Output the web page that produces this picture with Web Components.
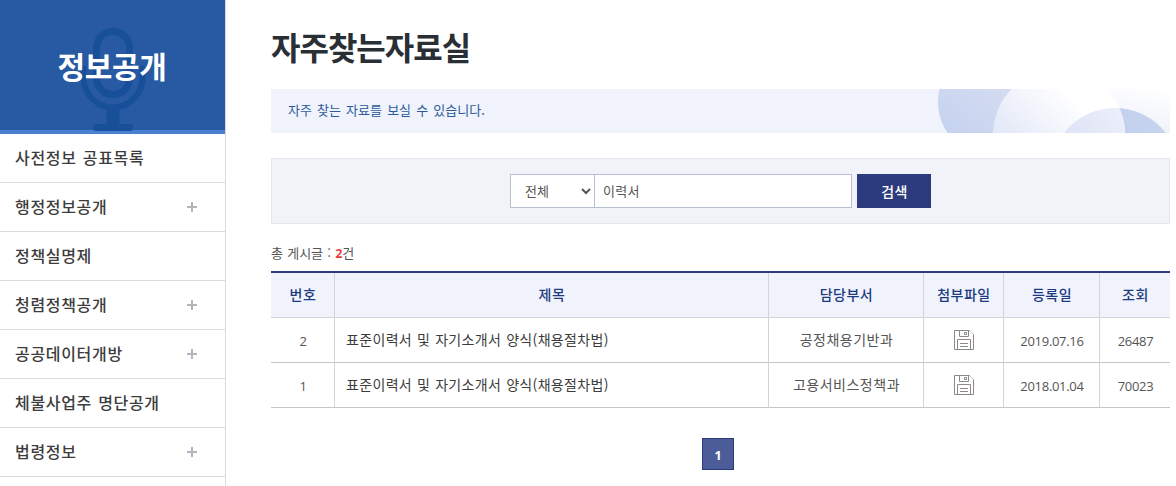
<!DOCTYPE html>
<html lang="ko">
<head>
<meta charset="UTF-8">
<title>자주찾는자료실</title>
<style>
  :root {
    --navy: #2c3b7d;
    --panel: #f0f3fb;
    --line: #d3d4d9;
    --ink: #3c3c3c;
  }
  body {
    margin: 0;
    height: 486px;
    overflow: hidden;
    background: #fff;
    color: var(--ink);
    font-family: "Noto Sans CJK KR", sans-serif;
    font-size: 13px;
  }
</style>
</head>
<body>
<info-page>
  <side-menu slot="side" heading="정보공개">
    <side-item>사전정보 공표목록</side-item>
    <side-item more>행정정보공개</side-item>
    <side-item>정책실명제</side-item>
    <side-item more>청렴정책공개</side-item>
    <side-item more>공공데이터개방</side-item>
    <side-item>체불사업주 명단공개</side-item>
    <side-item more>법령정보</side-item>
  </side-menu>
  <page-title>자주찾는자료실</page-title>
  <page-notice>자주 찾는 자료를 보실 수 있습니다.</page-notice>
  <search-bar value="이력서"></search-bar>
  <post-count count="2"></post-count>
  <post-table></post-table>
  <page-nav>1</page-nav>
</info-page>

<script>
function define(name, render) {
  customElements.define(name, class extends HTMLElement {
    constructor() {
      super();
      this.attachShadow({ mode: 'open' });
    }
    connectedCallback() {
      this.shadowRoot.innerHTML = render(this);
    }
  });
}

// ====== LAYOUT ======
define('info-page', () => `
  <style>
    :host { display: grid; grid-template-columns: 226px 899px; column-gap: 45px; height: 486px; }
    main { display: flex; flex-direction: column; }
  </style>
  <slot name="side"></slot>
  <main><slot></slot></main>
`);

// ====== SIDE MENU ======
define('side-menu', el => `
  <style>
    :host { display: block; box-sizing: border-box; height: 486px; border-right: 1px solid #dcdcdf; }
    header {
      position: relative;
      display: flex;
      justify-content: center;
      box-sizing: border-box;
      height: 134px;
      background: #275aa3;
      border-bottom: 4px solid #4a80d2;
    }
    svg { position: absolute; left: 0; top: 0; }
    h2 {
      position: relative;
      margin: 0;
      padding-right: 1px;
      color: #fff;
      font-size: 30px;
      font-weight: 700;
      line-height: 130px;
      letter-spacing: -0.4px;
    }
  </style>
  <header>
    <svg width="225" height="134" fill="none" stroke="#184f99" aria-hidden="true">
      <rect x="96.5" y="31.5" width="33" height="63" rx="16.5" stroke-width="7"/>
      <path d="M83.500 68.500v9a29.500 30 0 0 0 59 0v-9" stroke-width="6" stroke-linecap="round"/>
      <path d="M106.500 108h13v16h10a3.500 3.500 0 0 1 0 7h-33a3.500 3.500 0 0 1 0-7h10z" fill="#184f99" stroke="none"/>
    </svg>
    <h2>${el.getAttribute('heading')}</h2>
  </header>
  <nav><slot></slot></nav>
`);

define('side-item', el => `
  <style>
    :host {
      display: flex;
      align-items: center;
      justify-content: space-between;
      box-sizing: border-box;
      height: 49px;
      padding: 0 28px 0 15px;
      border-bottom: 1px solid #dcdcdf;
      font-size: 16px;
      font-weight: 500;
      letter-spacing: 0.68px;
      word-spacing: 1px;
    }
    span { padding-bottom: 2px; }
  </style>
  <span><slot></slot></span>
  ${el.hasAttribute('more') ? '<svg width="10" height="10" fill="#b1b4bc"><path d="M4 0h2v4h4v2H6v4H4V6H0V4h4z"/></svg>' : ''}
`);

// ====== HEADING ======
define('page-title', () => `
  <style>
    :host { display: block; height: 89px; }
    h1 { margin: 0; color: #2a2e35; font-size: 32px; font-weight: 700; line-height: 93px; letter-spacing: -1px; }
  </style>
  <h1><slot></slot></h1>
`);

define('page-notice', () => `
  <style>
    :host {
      display: flex;
      justify-content: space-between;
      height: 44px;
      margin-bottom: 25px;
      padding-left: 17px;
      background: var(--panel);
      color: #2d5a9c;
      line-height: 42px;
      word-spacing: 1.5px;
    }
  </style>
  <span><slot></slot></span>
  <svg width="233" height="44" viewBox="937 89 233 44" aria-hidden="true">
    <defs>
      <linearGradient id="back" x1="0" y1="1" x2="1" y2="0">
        <stop offset=".5" stop-color="#f0f3fb"/><stop offset="1" stop-color="#fff"/>
      </linearGradient>
      <linearGradient id="left" x1="0" y1="1" x2=".7" y2="0">
        <stop offset="0" stop-color="#c0cfee"/><stop offset="1" stop-color="#dce1f3"/>
      </linearGradient>
      <linearGradient id="mid" gradientUnits="userSpaceOnUse" x1="1010" y1="140" x2="1060" y2="85">
        <stop offset="0" stop-color="#e4e9f8"/><stop offset="1" stop-color="#fff"/>
      </linearGradient>
      <linearGradient id="right" gradientUnits="userSpaceOnUse" x1="1090" y1="133" x2="1150" y2="105">
        <stop offset="0" stop-color="#c2d0ee"/><stop offset="1" stop-color="#c6d3ef"/>
      </linearGradient>
      <linearGradient id="lens" gradientUnits="userSpaceOnUse" x1="1075" y1="133" x2="1118" y2="108">
        <stop offset="0" stop-color="#dfe5f6"/><stop offset="1" stop-color="#eceffa"/>
      </linearGradient>
      <clipPath id="midclip"><circle cx="1059" cy="135" r="66"/></clipPath>
    </defs>
    <rect x="937" y="89" width="233" height="44" fill="url(#back)"/>
    <circle cx="993" cy="102" r="55" fill="url(#left)"/>
    <circle cx="1115" cy="172.500" r="64.500" fill="url(#right)"/>
    <circle cx="1059" cy="135" r="66" fill="url(#mid)"/>
    <circle cx="1115" cy="172.500" r="64.500" fill="url(#lens)" clip-path="url(#midclip)"/>
  </svg>
`);

// ====== SEARCH ======
define('search-bar', el => `
  <style>
    :host { display: block; }
    form {
      display: flex;
      justify-content: center;
      align-items: center;
      box-sizing: border-box;
      height: 66px;
      margin: 0;
      border: 1px solid #e3e6f3;
      background: #f2f3f9;
    }
    select, input, button { box-sizing: border-box; height: 34px; margin: 0; border-radius: 0; font: inherit; }
    select, input { border: 1px solid #b8bfd5; background: #fff; color: #555; }
    select { width: 85px; padding: 0 1px 1px 10px; }
    input { width: 258px; margin-left: -1px; padding: 0 8px 2px; outline: 0; letter-spacing: 0.3px; }
    button { width: 74px; margin-left: 5px; padding: 0 0 1px 1px; border: 0; background: var(--navy); color: #fff; font-size: 14px; font-weight: 500; letter-spacing: 0.4px; }
  </style>
  <form>
    <select aria-label="검색 구분"><option>전체</option></select>
    <input type="text" aria-label="검색어" value="${el.getAttribute('value')}">
    <button type="button">검색</button>
  </form>
`);

// ====== BOARD ======
define('post-count', el => `
  <style>
    :host { display: block; height: 47px; color: #555; line-height: 58px; word-spacing: 0.6px; }
    b { color: #ee3e3e; font-family: "Open Sans", sans-serif; font-size: 12.5px; }
  </style>
  총 게시글 : <b>${el.getAttribute('count')}</b>건
`);

const posts = [
  { no: 2, title: '표준이력서 및 자기소개서 양식(채용절차법)', dept: '공정채용기반과', date: '2019.07.16', views: 26487 },
  { no: 1, title: '표준이력서 및 자기소개서 양식(채용절차법)', dept: '고용서비스정책과', date: '2018.01.04', views: 70023 },
];

define('file-icon', () => `
  <style>:host { display: inline-block; width: 20px; height: 20px; } svg { display: block; }</style>
  <svg width="20" height="20" fill="none" stroke="#8d878b" aria-label="첨부파일">
    <path d="M15.500.5H.5v19h19V4.500M5.500.5v6h9v-6M10.500 2.500h2v2h-2zM3.500 19.500v-10h13v10M6 13.500h8M6 16.500h8"/>
    <path d="M15.500.5l4 4" stroke-dasharray="1 .6"/>
  </svg>
`);

define('post-table', () => `
  <style>
    :host { display: block; }
    table { width: 899px; table-layout: fixed; border-collapse: separate; border-spacing: 0; border-top: 2px solid var(--navy); }
    th, td {
      box-sizing: border-box;
      height: 45px;
      padding: 0 0 2px 1px;
      border-right: 1px solid var(--line);
      border-bottom: 1px solid #c6c6c8;
      color: #555;
      font-size: 14px;
      font-weight: 400;
      line-height: 20px;
      letter-spacing: 0.5px;
      text-align: center;
    }
    th { background: var(--panel); border-bottom-color: var(--line); color: #1c3a80; font-weight: 500; }
    th:last-child, td:last-child { border-right: 0; }
    .title { padding-left: 11px; color: #3c3c3c; text-align: left; letter-spacing: 0.33px; word-spacing: 0.7px; }
    .num { padding: 1px 0 0 1px; font-family: "Open Sans", sans-serif; font-size: 13px; letter-spacing: -0.3px; }
    .file { padding: 0; line-height: 0; }
    file-icon { vertical-align: middle; }
  </style>
  <table>
    <colgroup><col width="64"><col width="434"><col width="155"><col width="80"><col width="96"><col width="70"></colgroup>
    <thead>
      <tr><th>번호</th><th>제목</th><th>담당부서</th><th>첨부파일</th><th>등록일</th><th>조회</th></tr>
    </thead>
    <tbody>
      ${posts.map(p => `
      <tr>
        <td class="num">${p.no}</td>
        <td class="title">${p.title}</td>
        <td>${p.dept}</td>
        <td class="file"><file-icon></file-icon></td>
        <td class="num">${p.date}</td>
        <td class="num">${p.views}</td>
      </tr>`).join('')}
    </tbody>
  </table>
`);

define('page-nav', () => `
  <style>
    :host { display: flex; justify-content: center; margin: 30px 5px 0 0; }
    span {
      box-sizing: border-box;
      width: 32px;
      height: 32px;
      border: 1px solid var(--navy);
      background: #4b5c98;
      color: #fff;
      font: 700 12.5px/33px "Open Sans", sans-serif;
      text-align: center;
    }
  </style>
  <span><slot></slot></span>
`);
</script>
</body>
</html>
